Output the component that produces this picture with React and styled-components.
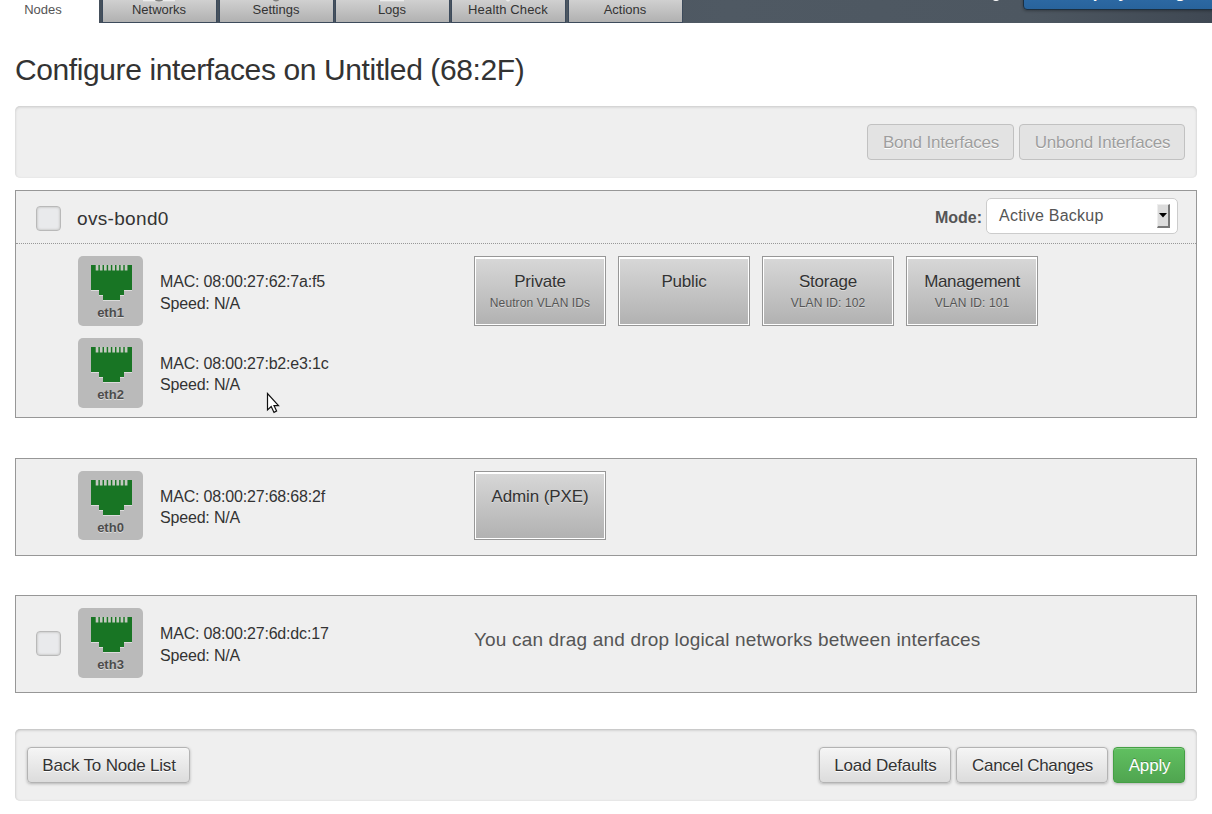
import React from "react";
import styled, { createGlobalStyle } from "styled-components";

const Global = createGlobalStyle`
  * { box-sizing: border-box; }
  body { margin: 0; background: #fff; color: #333; font-family: "Liberation Sans", Arial, sans-serif; font-size: 16px; }
  button { font: inherit; }
`;

const Page = styled.div`
  width: 1212px;
  height: 814px;
  overflow: hidden;
`;

const Header = styled.header`
  display: flex;
  height: 23px;
  overflow: hidden;
  background: linear-gradient(90deg, #434e5a, #4f5963 60%, #4d5761 85%, #3f4853);
`;

const Tab = styled.a`
  position: relative;
  flex: none;
  width: ${(p) => (p.$active ? 99 : 113)}px;
  height: ${(p) => (p.$active ? 23 : 22)}px;
  margin-right: ${(p) => p.$gap}px;
  padding-right: ${(p) => (p.$active ? 13 : 1)}px;
  background: ${(p) => (p.$active ? "#fff" : "linear-gradient(#d0d0d0, #b1b1b1)")};
  box-shadow: ${(p) => (p.$active ? "none" : "0 0 0 1px #3c4a5b")};
  color: ${(p) => (p.$active ? "#555" : "#333")};
  font-size: 13px;
  letter-spacing: ${(p) => p.$track || 0}px;
  line-height: 20px;
  text-align: center;
  svg { position: absolute; left: 0; top: 0; }
`;

const HeaderActions = styled.div`
  display: flex;
  align-items: flex-end;
  height: 10px;
  margin-left: auto;
`;

const Badge = styled.span`
  width: 8px;
  height: 12px;
  margin: 0 23px 9px 0;
  border-radius: 4px;
  background: #fff;
`;

const Deploy = styled.button`
  display: flex;
  flex: none;
  align-items: flex-end;
  width: 200px;
  height: 42px;
  margin-right: -11px;
  padding: 0 0 6px 47px;
  border: 1px solid #1c2f40;
  border-radius: 4px;
  background: linear-gradient(#3a7ab8, #28639c);
  box-shadow: 0 1px 3px rgba(0, 0, 0, 0.3);
  color: #fff;
  font-size: 17px;
  font-weight: bold;
  line-height: 20px;
  white-space: nowrap;
`;

const Main = styled.main`
  padding: 0 15px;
`;

const Title = styled.h1`
  height: 83px;
  margin: 0;
  padding-top: 29px;
  font-size: 30px;
  font-weight: normal;
  line-height: 36px;
  letter-spacing: -0.4px;
`;

const Bar = styled.div`
  display: flex;
  align-items: center;
  justify-content: flex-end;
  gap: 5px;
  height: 72px;
  padding: 0 12px;
  border-radius: 5px;
  background: #efefef;
  box-shadow: inset 0 1px 3px rgba(0, 0, 0, 0.17);
`;

const looks = {
  plain: { bg: "linear-gradient(#f5f5f5, #dcdcdc)", bd: "#b3b3b3", fg: "#333", ts: "0 1px 0 #fff" },
  disabled: { bg: "#e3e3e3", bd: "#c1c1c1", fg: "#9e9e9e", ts: "0 1px 0 #fff" },
  apply: { bg: "linear-gradient(#61c061, #50a550)", bd: "#45a045", fg: "#fff", ts: "0 -1px 0 rgba(0,0,0,.25)" },
};

const Button = styled.button`
  width: ${(p) => p.$w}px;
  height: 36px;
  margin-right: ${(p) => (p.$left ? "auto" : 0)};
  padding: 2px 0 0 1px;
  border: 1px solid ${(p) => looks[p.$look].bd};
  border-radius: 4px;
  background: ${(p) => looks[p.$look].bg};
  box-shadow: ${(p) => (p.$look === "disabled" ? "none" : "inset 0 1px 0 rgba(255,255,255,.25), 0 1px 3px rgba(0,0,0,.25)")};
  color: ${(p) => looks[p.$look].fg};
  text-shadow: ${(p) => looks[p.$look].ts};
  font-size: 17px;
  letter-spacing: ${(p) => p.$track ?? -0.2}px;
  white-space: nowrap;
`;

const Panel = styled.section`
  height: ${(p) => p.$h}px;
  margin-top: ${(p) => p.$top}px;
  border: 1px solid #979797;
  background: #efefef;
`;

const BondHead = styled.div`
  display: flex;
  align-items: center;
  height: 53px;
  padding: 0 18px 0 20px;
  border-bottom: 1px dotted #979797;
`;

const Check = styled.span`
  flex: none;
  width: 25px;
  height: 25px;
  margin-top: ${(p) => p.$drop || 0}px;
  border: 1px solid #b9b9b9;
  border-radius: 4px;
  background: #e9eaec;
  box-shadow: inset 0 0 2px 1px #d0d0d0;
`;

const BondName = styled.span`
  margin: 3px auto 0 16px;
  font-size: 19px;
  letter-spacing: 0.33px;
`;

const ModeLabel = styled.b`
  margin: 2px 4px 0 0;
  color: #555;
  font-size: 16px;
`;

const Select = styled.div`
  display: flex;
  align-items: center;
  justify-content: space-between;
  width: 192px;
  height: 36px;
  margin-top: -2px;
  padding: 0 7px 0 12px;
  border: 1px solid #ccc;
  border-radius: 5px;
  background: #fff;
  color: #555;
  font-size: 16px;
  letter-spacing: 0.25px;
`;

const Arrow = styled.span`
  display: flex;
  align-items: center;
  justify-content: center;
  width: 13px;
  height: 24px;
  border: 1px solid;
  border-width: 1px 2px 2px 1px;
  border-color: #eee #777 #777 #eee;
  background: #dcdcdc;
`;

const Row = styled.div`
  display: flex;
  height: 82px;
  padding: 12px 0 0 20px;
`;

const CheckSlot = styled.div`
  width: 42px;
  padding-top: 23px;
`;

const Nic = styled.div`
  display: flex;
  flex-direction: column;
  align-items: center;
  width: 65px;
  height: ${(p) => (p.$low ? 70 : 69)}px;
  padding-top: 9px;
  border-radius: 5px;
  background: #bababa;
  color: #4c4c4c;
  font-size: 13px;
  font-weight: bold;
  line-height: 15px;
  text-shadow: 0 1px 0 #ddd;
  svg { margin: 0 -3px 4px 0; }
`;

const Info = styled.div`
  width: 314px;
  margin: 15px 0 0 17px;
  font-size: 16px;
  line-height: ${(p) => p.$lh}px;
  letter-spacing: -0.18px;
`;

const Networks = styled.div`
  display: flex;
  gap: 12px;
`;

const Network = styled.div`
  width: 132px;
  height: ${(p) => p.$h || 70}px;
  padding-top: 13px;
  border: 1px solid #979797;
  background: linear-gradient(#d8d8d8, #b1b1b1);
  box-shadow: inset 0 1px 0 1px #fff, inset 0 0 0 1px #fff;
  font-size: 17px;
  line-height: 23px;
  letter-spacing: ${(p) => p.$track ?? -0.2}px;
  text-align: center;
  text-shadow: 0 1px 0 rgba(255,255,255,.4);
  small { display: block; color: #555; font-size: 12px; line-height: 20px; letter-spacing: 0.1px; }
`;

const Hint = styled.p`
  margin: 20px 0 0;
  color: #555;
  font-size: 19px;
  line-height: 24px;
  letter-spacing: 0.17px;
`;

const Footer = styled(Bar)`
  margin-top: 36px;
  box-shadow: inset 0 1px 3px rgba(0, 0, 0, 0.24);
`;

const Cursor = styled.svg`
  position: absolute;
  left: 266px;
  top: 392px;
`;

const slots = [0, 1, 2, 3, 4, 5, 6, 7];

function Port() {
  const outline = "M0 0H41V25H33V30H29V35H12V30H8V25H0Z";
  return (
    <svg width="42" height="36" viewBox="0 0 42 36">
      <path d={outline} transform="translate(0 1)" fill="#dcdcdc" />
      <path d={outline} fill="#187524" />
      {slots.map((n) => <rect key={n} x={4.7 + n * 4.15} y="0" width="2.7" height="5.5" fill="#c4c8c0" />)}
    </svg>
  );
}

function TabIcon({ line, dot }) {
  return (
    <svg width="113" height="3">
      {line && <rect x={line[0]} y="0" width={line[1]} height="1.3" fill="#ececec" />}
      {dot && <ellipse cx={dot[0]} cy="0" rx={dot[1]} ry="1.4" fill={dot[2] || "#808080"} />}
    </svg>
  );
}

function Interface({ name, mac, check, lh = 21.5, children }) {
  return (
    <Row>
      <CheckSlot>{check && <Check as="div" />}</CheckSlot>
      <Nic $low={name !== "eth0"}><Port />{name}</Nic>
      <Info $lh={lh}>MAC: {mac}<br />Speed: N/A</Info>
      <Networks>{children}</Networks>
    </Row>
  );
}

export default function App() {
  return (
    <Page>
      <Global />
      <Header>
        <Tab $active $gap={4}>Nodes</Tab>
        <Tab $gap={4}>Networks<TabIcon line={[40, 32]} dot={[56, 4]} /></Tab>
        <Tab $gap={3}>Settings<TabIcon dot={[56, 3]} /></Tab>
        <Tab $gap={3}>Logs<TabIcon line={[44, 24]} /></Tab>
        <Tab $gap={4} $track={0.15}>Health Check<TabIcon dot={[56, 2, "#ececec"]} /></Tab>
        <Tab $gap={0}>Actions</Tab>
        <HeaderActions><Badge /><Deploy>Deploy Changes</Deploy></HeaderActions>
      </Header>
      <Main>
        <Title>Configure interfaces on Untitled (68:2F)</Title>
        <Bar>
          <Button $look="disabled" $w={147}>Bond Interfaces</Button>
          <Button $look="disabled" $w={166}>Unbond Interfaces</Button>
        </Bar>
        <Panel $h={228} $top={12}>
          <BondHead>
            <Check $drop={2} />
            <BondName>ovs-bond0</BondName>
            <ModeLabel>Mode:</ModeLabel>
            <Select>Active Backup<Arrow><svg width="8" height="5"><path d="M0 0H8L4 4.5Z" /></svg></Arrow></Select>
          </BondHead>
          <Interface name="eth1" mac="08:00:27:62:7a:f5">
            <Network>Private<small>Neutron VLAN IDs</small></Network>
            <Network>Public</Network>
            <Network>Storage<small>VLAN ID: 102</small></Network>
            <Network $track={-0.35}>Management<small>VLAN ID: 101</small></Network>
          </Interface>
          <Interface name="eth2" mac="08:00:27:b2:e3:1c" lh={21} />
        </Panel>
        <Panel $h={98} $top={40}>
          <Interface name="eth0" mac="08:00:27:68:68:2f" lh={21}><Network $h={69} $track={-0.1}>Admin (PXE)</Network></Interface>
        </Panel>
        <Panel $h={98} $top={39}>
          <Interface name="eth3" mac="08:00:27:6d:dc:17" check>
            <Hint>You can drag and drop logical networks between interfaces</Hint>
          </Interface>
        </Panel>
        <Footer>
          <Button $look="plain" $w={163} $left>Back To Node List</Button>
          <Button $look="plain" $w={132}>Load Defaults</Button>
          <Button $look="plain" $w={152} $track={-0.35}>Cancel Changes</Button>
          <Button $look="apply" $w={72}>Apply</Button>
        </Footer>
      </Main>
      <Cursor width="14" height="22" viewBox="0 0 14 22"><path d="M1.5 1.5V18L5.2 14.6L8 20.4L10.6 19L8 13.6H12.5Z" fill="#fff" stroke="#111" strokeWidth="1.2" /></Cursor>
    </Page>
  );
}
